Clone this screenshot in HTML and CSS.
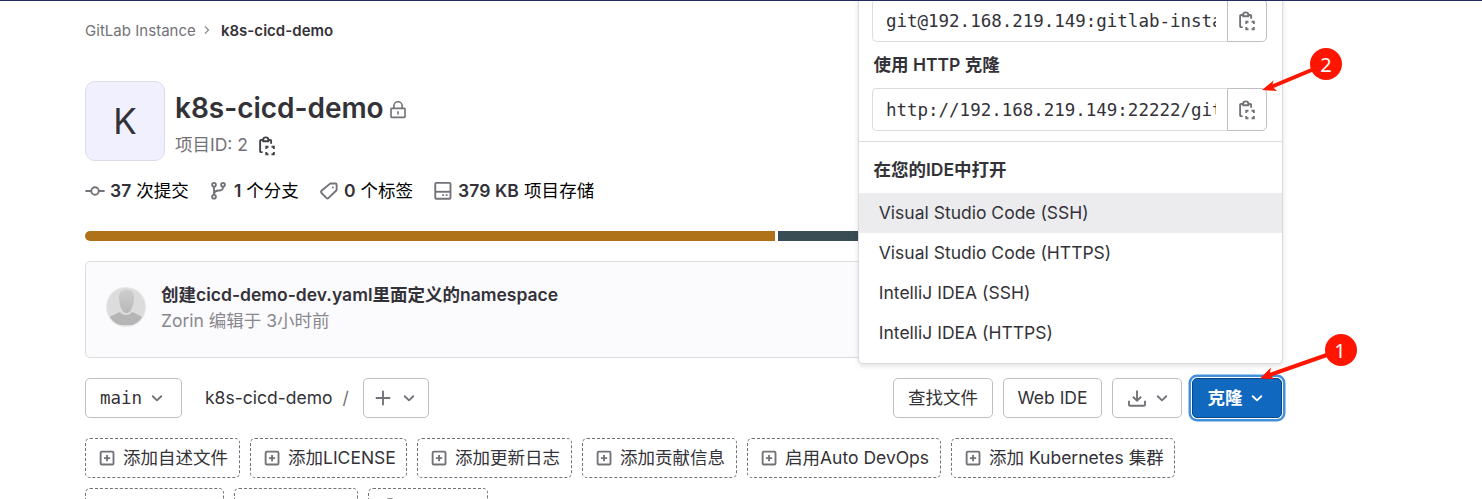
FILE: index.html
```html
<!DOCTYPE html>
<html lang="zh-CN">
<head>
<meta charset="utf-8">
<title>k8s-cicd-demo</title>
<link rel="stylesheet" href="styles.css">
</head>
<body>
<svg class="sprite" aria-hidden="true">
  <symbol id="chevron" viewBox="0 0 16 16"><path d="m4.600 6.600 3.400 3.300 3.400-3.300" stroke-linecap="round" stroke-linejoin="round"/></symbol>
  <symbol id="copy" viewBox="0 0 16 16"><path d="M4.500 3.200H3.200a.7.7 0 0 0-.7.7v8.300a.7.7 0 0 0 .7.700h1.300M9.300 3.200h1.300a.7.7 0 0 1 .7.700v2.300M5 2.600V4.200h4V2.600C9 1.700 8.200 1.100 7 1.100S5 1.700 5 2.600M9.200 8.600H7.400v1.800M11.600 8.600h1.900v1.800M7.400 12.700v1.900h1.800M11.600 14.600h1.900v-1.900"/></symbol>
  <symbol id="plus-square" viewBox="0 0 16 16"><rect x="2.900" y="2.900" width="10.300" height="10.300" rx="1"/><path d="M8.050 5.600v5M5.550 8.100h5"/></symbol>
</svg>
<main class="page">
  <nav class="crumbs">
    <span class="crumb-root">GitLab Instance</span>
    <svg class="crumb-sep" viewBox="0 0 8 12"><path d="m2 2.500 3.500 3.500L2 9.500"/></svg>
    <strong class="crumb-here">k8s-cicd-demo</strong>
  </nav>

  <header class="project">
    <div class="avatar">K</div>
    <div class="project-info">
      <div class="title-row">
        <h1 class="title">k8s-cicd-demo</h1>
        <svg class="icon lock" viewBox="0 0 16 16"><rect x="2.400" y="6.700" width="11.200" height="7.200" rx=".5"/><path d="M4.700 6.500V4.700a3.300 3.300 0 0 1 6.600 0v1.800M8 9v2.600"/></svg>
      </div>
      <div class="id-row"><span>项目ID: 2</span><svg class="icon dark"><use href="#copy"/></svg></div>
    </div>
  </header>

  <ul class="stats">
    <li class="stat s-commit"><svg class="icon" viewBox="0 0 16 16"><circle cx="8" cy="8" r="3"/><path d="M.3 8H5M11 8h4.700"/></svg><span><b>37</b> 次提交</span></li>
    <li class="stat s-branch"><svg class="icon" viewBox="0 0 16 16"><circle cx="4" cy="3" r="1.500"/><circle cx="11.200" cy="3" r="1.500"/><circle cx="4" cy="12.600" r="1.500"/><path d="M4 4.500v6.600M11.200 4.500C11.200 7.600 9.500 7.600 8 7.600S4 8 4 11"/></svg><span><b>1</b> 个分支</span></li>
    <li class="stat s-tag"><svg class="icon" viewBox="0 0 16 16"><path d="M9.300 2h3.800a1 1 0 0 1 1 1v3.900a1 1 0 0 1-.3.7L7.700 13.500a1.300 1.300 0 0 1-1.800 0L2 9.600a1.300 1.300 0 0 1 0-1.800l6.600-5.500a1 1 0 0 1 .7-.3z"/><circle cx="11" cy="5.200" r=".8" class="fill"/></svg><span><b>0</b> 个标签</span></li>
    <li class="stat s-disk"><svg class="icon" viewBox="0 0 16 16"><rect x="1.800" y="1.500" width="12.200" height="12.700" rx=".8"/><path d="M1.800 8.600H14"/><path class="fill" d="M7.300 10.600h1.400V12H7.300zM10.200 10.600h1.400V12h-1.400z"/></svg><span><b>379 KB</b> 项目存储</span></li>
  </ul>

  <div class="languages"><i class="lang brown"></i><i class="lang slate"></i></div>

  <section class="commit">
    <svg class="face" viewBox="0 0 40 40">
      <defs>
        <clipPath id="round"><circle cx="20" cy="20" r="19"/></clipPath>
        <linearGradient id="skin" x1="0" y1="0" x2="0" y2="1"><stop offset="0" stop-color="#cdcdcd"/><stop offset="1" stop-color="#b8b8b8"/></linearGradient>
      </defs>
      <circle cx="20" cy="20" r="20" fill="#e6e6e7"/><circle cx="20" cy="20" r="19" fill="#dcdcdc"/>
      <g clip-path="url(#round)"><path d="M3 31c3-3 7-4 11-6 2 4 10 4 12 0 4 2 8 3 11 6v7H3z" fill="#b5b5b5"/></g>
      <path d="M20.500 3c5 0 8 2.500 7.500 8-.4 8-3 15-7.500 15S13.400 19 13 11c-.4-5.500 2.500-8 7.500-8z" fill="url(#skin)"/>
    </svg>
    <div class="commit-text">
      <div class="commit-title">创建cicd-demo-dev.yaml里面定义的namespace</div>
      <div class="commit-meta">Zorin 编辑于 3小时前</div>
    </div>
  </section>

  <div class="tree">
    <div class="btn ref"><span class="mono">main</span><svg class="icon"><use href="#chevron"/></svg></div>
    <div class="path"><span>k8s-cicd-demo</span><span class="slash">/</span></div>
    <div class="btn add"><svg class="icon" viewBox="0 0 16 16"><path d="M8 2.200v11.600M2.200 8h11.600"/></svg><svg class="icon"><use href="#chevron"/></svg></div>
    <div class="actions">
      <div class="btn find"><span>查找文件</span></div>
      <div class="btn ide"><span>Web IDE</span></div>
      <div class="btn download"><svg class="icon" viewBox="0 0 16 16"><path d="M8 2v8M4.700 7 8 10.200 11.300 7M1.600 10.200v3.200a.8.8 0 0 0 .8.800h11.200a.8.8 0 0 0 .8-.8v-3.200"/></svg><svg class="icon"><use href="#chevron"/></svg></div>
      <div class="btn clone"><span>克隆</span><svg class="icon"><use href="#chevron"/></svg></div>
    </div>
  </div>

  <div class="suggestions">
    <div class="hint w155"><svg class="icon"><use href="#plus-square"/></svg><span>添加自述文件</span></div>
    <div class="hint w157"><svg class="icon"><use href="#plus-square"/></svg><span>添加LICENSE</span></div>
    <div class="hint w155"><svg class="icon"><use href="#plus-square"/></svg><span>添加更新日志</span></div>
    <div class="hint w155"><svg class="icon"><use href="#plus-square"/></svg><span>添加贡献信息</span></div>
    <div class="hint w194"><svg class="icon"><use href="#plus-square"/></svg><span>启用Auto DevOps</span></div>
    <div class="hint w224"><svg class="icon"><use href="#plus-square"/></svg><span>添加 Kubernetes 集群</span></div>
  </div>
  <div class="suggestions second">
    <div class="hint w139"></div>
    <div class="hint w124"></div>
    <div class="hint w120"><svg class="icon" viewBox="0 0 16 16"><circle cx="8" cy="8" r="2.500"/><path d="M6.500 1h3l.5 2 2 1 2-.5 1 2.500-1.500 2L15 10l-1 2.500-2-.5-2 1-.5 2h-3L6 13l-2-1-2 .5L1 10l1.500-2L1 6l1-2.500 2 .5 2-1z"/></svg></div>
  </div>
</main>

<aside class="menu">
  <div class="clone-part">
    <div class="field"><div class="url mono"><span>git@192.168.219.149:gitlab-instance</span></div><div class="copy"><svg class="icon"><use href="#copy"/></svg></div></div>
    <div class="label">使用 HTTP 克隆</div>
    <div class="field"><div class="url mono"><span>http://192.168.219.149:22222/gitlab</span></div><div class="copy"><svg class="icon"><use href="#copy"/></svg></div></div>
  </div>
  <div class="label ide-label">在您的IDE中打开</div>
  <div class="item active">Visual Studio Code (SSH)</div>
  <div class="item">Visual Studio Code (HTTPS)</div>
  <div class="item">IntelliJ IDEA (SSH)</div>
  <div class="item">IntelliJ IDEA (HTTPS)</div>
</aside>

<svg class="notes" viewBox="0 0 1482 499">
  <path class="shaft" d="M1326 64 1271 87"/><path d="m1262 90 11.500-9.500-1.500 6 5 4.500z"/>
  <circle cx="1326" cy="64" r="16"/><text x="1326" y="72">2</text>
  <path class="shaft" d="M1341 350 1268 375.500"/><path d="m1260 378.500 11-11-1.500 7.500 5 4z"/>
  <circle cx="1341" cy="350" r="16"/><text x="1340" y="358">1</text>
</svg>
</body>
</html>
```

FILE: styles.css
```css
* { box-sizing: border-box; }
html { overflow: hidden; }
body {
  margin: 0;
  height: 499px;
  overflow: hidden;
  position: relative;
  background: #fff;
  border-top: 1px solid #292961;
  color: #333238;
  font: 17.5px/25px Inter, "Noto Sans CJK SC", sans-serif;
  white-space: nowrap;
}
.sprite { display: none; }
.page { width: 1197px; height: 498px; overflow: clip; overflow-clip-margin: 5px; margin-left: 85px; }
.mono { font-family: "DejaVu Sans Mono", monospace; }
.icon { width: 20px; height: 20px; flex: none; fill: none; stroke: #737278; stroke-width: 1.5; }
.icon .fill { fill: #737278; stroke: none; }
.dark { stroke: #434248; }

.crumbs { display: flex; align-items: center; height: 58px; font-size: 15px; color: #737278; }
.crumb-root { letter-spacing: .03px; }
.crumb-sep { width: 8px; height: 12px; margin: 0 10px 0 7px; fill: none; stroke: #89888d; stroke-width: 1.2; }
.crumb-here { font-weight: 600; color: #333238; letter-spacing: .03px; }

.project { display: flex; gap: 10px; margin-top: 22px; height: 80px; }
.avatar {
  width: 80px; height: 80px; border-radius: 10px; background: #f1f0ff; border: 1px solid #dddbea;
  display: flex; align-items: center; justify-content: center; font-size: 35px;
}
.title-row { display: flex; align-items: center; height: 54px; gap: 4px; }
.title { margin: 0; font-size: 28px; font-weight: 600; letter-spacing: -.03px; }
.lock { margin-top: 3px; stroke-width: 1.3; }
.id-row { display: flex; align-items: center; height: 19px; gap: 9px; color: #737278; }
.id-row .icon { margin-top: 2px; }

.stats { display: flex; align-items: center; list-style: none; margin: 17px 0 0; padding: 0; height: 25px; color: #000; }
.stat { display: flex; align-items: center; gap: 5px; }
.stat b { font-weight: 600; color: #333238; }
.s-commit { width: 124px; }
.s-branch { width: 110px; }
.s-tag { width: 114px; }
.s-disk { letter-spacing: .08px; }

.languages { display: flex; gap: 3px; height: 10px; margin-top: 28px; border-radius: 5px; overflow: hidden; }
.lang.brown { width: 690px; background: #b07219; }
.lang.slate { flex: 1; background: #384d54; }

.commit {
  display: flex; gap: 15px; height: 97px; margin-top: 20px; padding: 20px; align-items: center;
  background: #fbfafd; border: 1px solid #dcdcde; border-radius: 5px;
}
.face { width: 40px; height: 40px; margin-top: -6px; }
.commit-text { line-height: 26px; margin-top: -4px; }
.commit-title { font-weight: 600; }
.commit-meta { color: #89888d; }

.tree { display: flex; margin-top: 20px; height: 40px; align-items: center; }
.btn {
  height: 40px; border: 1px solid #bfbfc3; border-radius: 5px; background: #fff;
  display: flex; align-items: center; justify-content: center;
}
.btn span, .hint span, .path { margin-bottom: 2px; }
.btn .mono { margin-bottom: 0; }
.ref { width: 97px; gap: 5px; }
.path { width: 181px; padding-left: 23px; display: flex; gap: 10px; }
.slash { color: #737278; }
.add { width: 66px; gap: 6px; }
.actions { display: flex; gap: 10px; margin-left: auto; }
.find { width: 100px; }
.ide { width: 99px; }
.download { width: 70px; gap: 5px; padding-left: 5px; }
.clone {
  width: 90px; gap: 4px; color: #fff; font-weight: 700; background: #1068bf; border-color: #064787;
  box-shadow: 0 0 0 1px #fff, 0 0 0 3.5px #428fdc;
}
.clone .icon { stroke: #fff; }

.suggestions { display: flex; gap: 10px; margin-top: 20px; }
.suggestions.second { margin-top: 10px; }
.hint {
  height: 40px; border: 1px dashed #737278; border-radius: 5px; padding: 0 11px;
  display: flex; align-items: center; gap: 6px;
}
.w120 { width: 120px; } .w124 { width: 124px; } .w139 { width: 139px; }
.w155 { width: 155px; } .w157 { width: 157px; } .w194 { width: 194px; } .w224 { width: 224px; }

.menu {
  position: absolute; left: 857.5px; top: -6px; width: 425px; height: 369px;
  background: #fff; border: 1px solid #dcdcde; border-top: 0; border-radius: 0 0 5px 5px;
  box-shadow: 0 2px 5px rgba(0, 0, 0, .12);
  clip-path: inset(6px -10px -10px -10px);
}
.clone-part { padding: 4px 15px 0 13.5px; height: 147px; border-bottom: 1px solid #dcdcde; }
.field { display: flex; height: 43px; }
.url {
  width: 354.5px; padding: 2px 11px 0 13px; border: 1px solid #dcdcde; border-right: 0; border-radius: 5px 0 0 5px;
  display: flex; align-items: center;
}
.url span { overflow: hidden; min-width: 0; flex: 1; letter-spacing: -.02px; }
.copy { width: 40.5px; border: 1px solid #bfbfc3; border-radius: 0 5px 5px 0; display: flex; align-items: center; justify-content: center; }
.label { font-weight: 600; height: 46px; line-height: 46px; padding-left: 1.5px; }
.ide-label { height: 51px; line-height: 56px; padding-left: 15px; }
.item { height: 40px; line-height: 40px; padding-left: 20.3px; }
.active { background: #ececef; }

.notes { position: absolute; left: 0; top: -1px; width: 1482px; height: 499px; fill: #ff1500; }
.shaft { stroke: #ff1500; stroke-width: 4; }
.notes text { fill: #fff; font: 20px "Noto Sans", sans-serif; text-anchor: middle; }
```
